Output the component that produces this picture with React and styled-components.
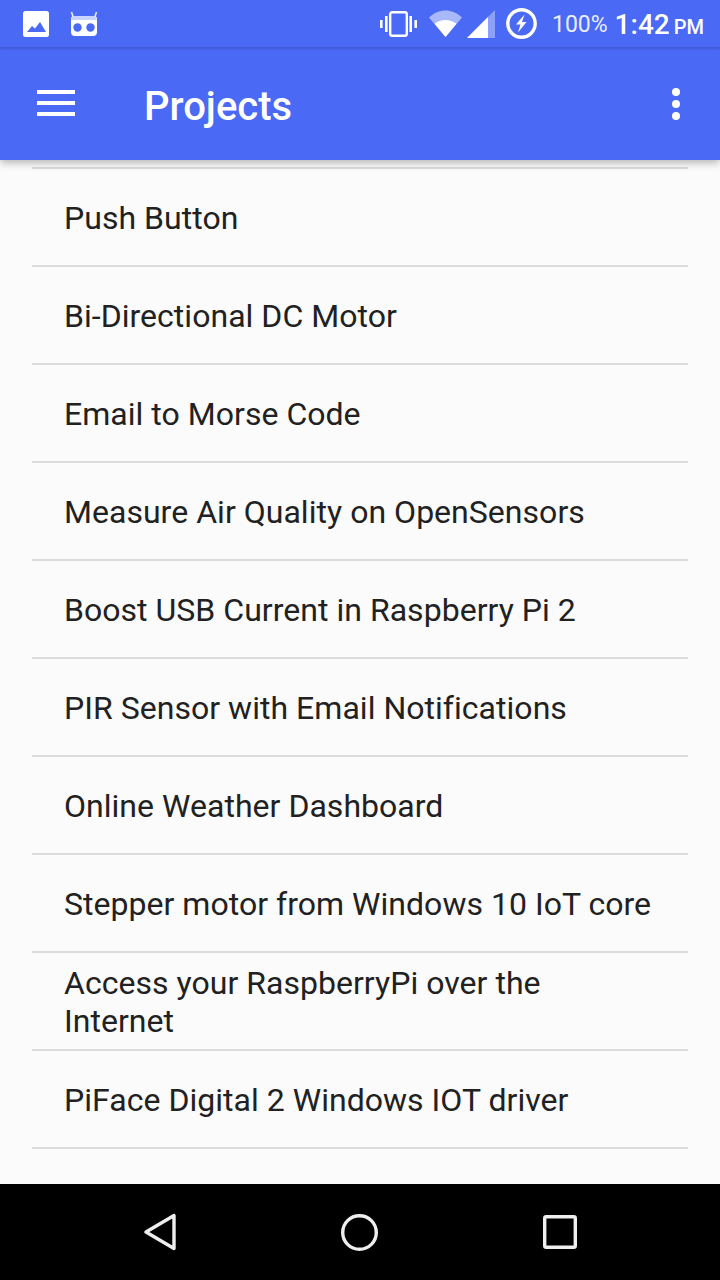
import styled, { createGlobalStyle } from "styled-components";

const Global = createGlobalStyle`
  html, body {
    margin: 0;
    padding: 0;
    background: #fbfbfb;
  }
  body {
    font-family: Roboto, "Liberation Sans", sans-serif;
  }
`;

const Screen = styled.div`
  width: 720px;
  height: 1280px;
  display: flex;
  flex-direction: column;
  overflow: hidden;
`;
const Header = styled.header`
  position: relative;
  z-index: 2;
  background: #4a69f5;
  box-shadow: 0 3px 8px rgba(0, 0, 0, 0.28);
`;
const StatusBar = styled.div`
  height: 47px;
  display: flex;
  align-items: center;
  padding: 0 16px 0 23px;
  color: #fff;
  border-bottom: 1px solid #3f5ad6;
  box-shadow: 0 1px 2px rgba(40, 60, 160, 0.35);
`;
const StatusLeft = styled.div`
  display: flex;
  align-items: center;
  gap: 21px;
  margin-right: auto;
`;
const StatusRight = styled.div`
  display: flex;
  align-items: center;
`;
const IconSlot = styled.span`
  display: flex;
  margin-left: ${(props) => props.$gap || 0}px;
`;
const Battery = styled.span`
  font-size: 23px;
  margin-left: 15px;
  padding-top: 2px;
  color: #e9edff;
`;
const Clock = styled.span`
  font-size: 28px;
  font-weight: 500;
  margin-left: 7px;
  padding-top: 2px;
`;
const Meridiem = styled.span`
  font-size: 20px;
  font-weight: 500;
  margin-left: 4px;
  padding-top: 6px;
`;
const Toolbar = styled.div`
  height: 112px;
  display: flex;
  align-items: center;
  padding: 0 40px 0 37px;
  color: #fff;
`;
const MenuSlot = styled.span`
  display: flex;
  margin-bottom: 2px;
`;
const Title = styled.h1`
  margin: 0 0 0 69px;
  padding-top: 4px;
  font-size: 40px;
  font-weight: 500;
  flex: 1;
`;
const List = styled.ul`
  flex: 1;
  list-style: none;
  margin: 0;
  padding: 7px 32px 0;
  background: #fbfbfb;
`;
const Row = styled.li`
  box-sizing: border-box;
  height: 98px;
  display: flex;
  align-items: center;
  padding: 2px 32px 0;
  border-top: 2px solid #dcdcdc;
  font-size: 32px;
  line-height: 38px;
  letter-spacing: 0.03px;
  color: #212121;
  &:last-child {
    height: 2px;
    padding: 0;
  }
`;
const NavBar = styled.nav`
  height: 96px;
  background: #000;
  display: flex;
  align-items: center;
  justify-content: space-between;
  padding: 0 143px 0 144px;
`;

const projects = [
  "Push Button",
  "Bi-Directional DC Motor",
  "Email to Morse Code",
  "Measure Air Quality on OpenSensors",
  "Boost USB Current in Raspberry Pi 2",
  "PIR Sensor with Email Notifications",
  "Online Weather Dashboard",
  "Stepper motor from Windows 10 IoT core",
  "Access your RaspberryPi over the Internet",
  "PiFace Digital 2 Windows IOT driver",
];

const ImageIcon = () => (
  <svg width="26" height="26" viewBox="0 0 26 26">
    <rect width="26" height="26" rx="2.5" fill="#fff" />
    <path d="M4 21l5-6 3 2.500 5-6.500 6 10z" fill="#4a69f5" />
  </svg>
);

const RobotIcon = () => (
  <svg width="28" height="26" viewBox="0 0 28 26">
    <path d="M3.500 7L1.500 1M24.500 7l2-6" stroke="#e6eaff" strokeWidth="1.6" />
    <path d="M4 5h20a3 3 0 0 1 3 3v13a4 4 0 0 1-4 4H5a4 4 0 0 1-4-4V8a3 3 0 0 1 3-3z" fill="#fff" />
    <path d="M3 5h22l2 4H1z" fill="#c9d3ff" />
    <circle cx="7.500" cy="16.500" r="4.200" fill="#4a69f5" />
    <circle cx="20.500" cy="16.500" r="4.200" fill="#4a69f5" />
  </svg>
);

const VibrateIcon = () => (
  <svg width="37" height="26" viewBox="0 0 37 26" fill="#fff">
    <rect x="10.200" y="1.200" width="16.600" height="23.600" rx="2" fill="none" stroke="#fff" strokeWidth="2.400" />
    <rect x="5" y="5" width="2.600" height="16" />
    <rect x="0" y="9" width="2.600" height="8" />
    <rect x="29.400" y="5" width="2.600" height="16" />
    <rect x="34.400" y="9" width="2.600" height="8" />
  </svg>
);

const WifiIcon = () => (
  <svg width="33" height="27" viewBox="0 0 33 27">
    <path d="M0 7.500C9.500-2 23.500-2 33 7.500L16.500 27z" fill="#a9b8fb" />
    <path d="M5.500 13.800C12 8.800 21 8.800 27.500 13.800L16.500 27z" fill="#fff" />
  </svg>
);

const SignalIcon = () => (
  <svg width="28" height="28" viewBox="0 0 28 28">
    <path d="M0 28L28 0v28z" fill="#8ea1f8" />
    <path d="M0 28L21 7v21z" fill="#fff" />
  </svg>
);

const ChargeIcon = () => (
  <svg width="31" height="31" viewBox="0 0 31 31">
    <circle cx="15.500" cy="15.500" r="13.700" fill="none" stroke="#fff" strokeWidth="3.400" />
    <path d="M18.500 6.500l-8.500 10h4.500l-2.500 8 8.500-10.500h-4.500z" fill="#fff" />
  </svg>
);

const MenuIcon = () => (
  <svg width="38" height="26" viewBox="0 0 38 26" fill="#fff">
    <rect width="38" height="4" />
    <rect y="11" width="38" height="4" />
    <rect y="22" width="38" height="4" />
  </svg>
);

const MoreIcon = () => (
  <svg width="8" height="32" viewBox="0 0 8 32" fill="#fff">
    <circle cx="4" cy="4" r="4" />
    <circle cx="4" cy="16" r="4" />
    <circle cx="4" cy="28" r="4" />
  </svg>
);

const BackIcon = () => (
  <svg width="32" height="38" viewBox="0 0 32 38">
    <path d="M30 2.500v33L2 19z" fill="none" stroke="#eee" strokeWidth="3.400" strokeLinejoin="round" />
  </svg>
);

const HomeIcon = () => (
  <svg width="37" height="37" viewBox="0 0 37 37">
    <circle cx="18.500" cy="18.500" r="16.800" fill="none" stroke="#eee" strokeWidth="3.400" />
  </svg>
);

const RecentsIcon = () => (
  <svg width="34" height="34" viewBox="0 0 34 34">
    <rect x="1.700" y="1.700" width="30.600" height="30.600" rx="1.500" fill="none" stroke="#eee" strokeWidth="3.400" />
  </svg>
);

export default function App() {
  return (
    <Screen>
      <Global />
      <Header>
        <StatusBar>
          <StatusLeft>
            <ImageIcon />
            <RobotIcon />
          </StatusLeft>
          <StatusRight>
            <IconSlot>
              <VibrateIcon />
            </IconSlot>
            <IconSlot $gap={12}>
              <WifiIcon />
            </IconSlot>
            <IconSlot $gap={5}>
              <SignalIcon />
            </IconSlot>
            <IconSlot $gap={11}>
              <ChargeIcon />
            </IconSlot>
            <Battery>100%</Battery>
            <Clock>1:42</Clock>
            <Meridiem>PM</Meridiem>
          </StatusRight>
        </StatusBar>
        <Toolbar>
          <MenuSlot>
            <MenuIcon />
          </MenuSlot>
          <Title>Projects</Title>
          <MoreIcon />
        </Toolbar>
      </Header>
      <List>
        {projects.map((name) => (
          <Row key={name}>{name}</Row>
        ))}
        <Row />
      </List>
      <NavBar>
        <BackIcon />
        <HomeIcon />
        <RecentsIcon />
      </NavBar>
    </Screen>
  );
}
